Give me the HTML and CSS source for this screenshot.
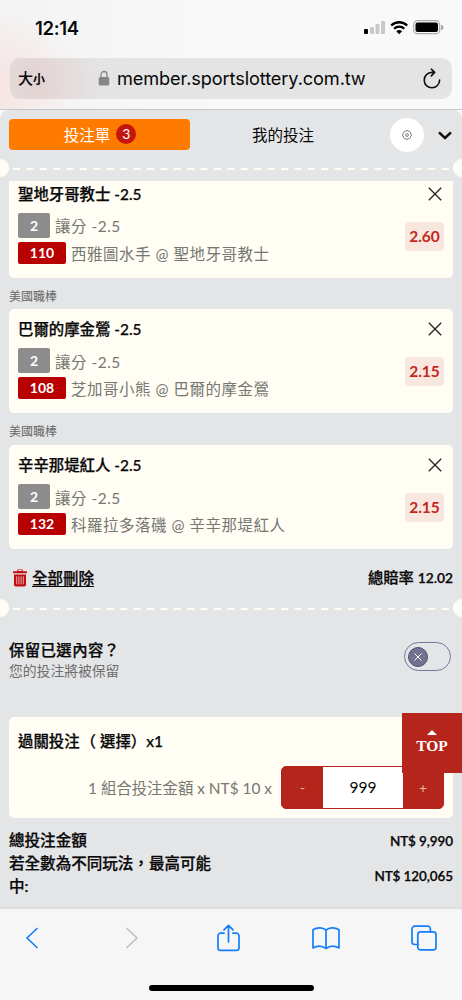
FILE: index.html
```
<!DOCTYPE html>
<html lang="zh-Hant">
<head>
<meta charset="utf-8">
<title>投注單</title>
<link rel="stylesheet" href="styles.css">
</head>
<body>
<div class="phone">
  <header class="browser-top">
    <div class="status">
      <span class="clock">12:14</span>
      <svg class="status-icons" width="80" height="16" viewBox="0 0 80 16">
        <rect x="0" y="9" width="4" height="5" rx="1" fill="#000"/>
        <g fill="#c8c8c8"><rect x="6" y="7" width="4" height="7" rx="1"/><rect x="11.500" y="4" width="4" height="10" rx="1"/><rect x="17" y="1" width="4" height="13" rx="1"/></g>
        <g fill="none" stroke="#000" stroke-width="2.300"><path d="M27.200 5.500a11.500 11.500 0 0 1 16 0"/><path d="M30.100 8.800a7.300 7.300 0 0 1 10.200 0"/></g>
        <path d="M32.300 11.200a4.300 4.300 0 0 1 5.800 0l-2.900 3z" fill="#000"/>
        <rect x="49.700" y=".7" width="26" height="13" rx="3.800" fill="none" stroke="#aaa" stroke-width="1.200"/>
        <rect x="51.500" y="2.500" width="22.500" height="9.500" rx="2" fill="#000"/>
        <path d="M77 5a2.500 2.500 0 0 1 0 5z" fill="#aaa"/>
      </svg>
    </div>
    <div class="address">
      <span class="text-size">大<small>小</small></span>
      <div class="host">
        <svg width="12" height="16" viewBox="0 0 12 16"><path d="M3 8V4.500a3 3 0 0 1 6 0V8" fill="none" stroke="#85858a" stroke-width="1.300"/><rect x=".7" y="7" width="10.500" height="8.500" rx="1.600" fill="#85858a"/></svg>
        <span>member.sportslottery.com.tw</span>
      </div>
      <svg class="reload" width="20" height="22" viewBox="0 0 20 22" fill="none" stroke="#111" stroke-width="1.600" stroke-linecap="round" stroke-linejoin="round"><path d="M17.600 12a7.700 7.700 0 1 1-7.700-7.600h2.600M9.300 1.200l3.400 3.200-3.400 3.500"/></svg>
    </div>
  </header>

  <main class="slip">
    <nav class="tabs">
      <div class="tab tab-active">投注單<span class="count">3</span></div>
      <div class="tab">我的投注</div>
      <div class="settings"><svg width="10" height="10" viewBox="0 0 10 10" fill="none" stroke="#666" stroke-width=".8"><path d="M4.100.6h1.800l.4 1 .9-.4 1.500 1.500-.4 1 1.100.4v1.800l-1 .4.400.9-1.500 1.500-1-.4-.4 1.100H4.100l-.4-1-1 .4-1.500-1.500.4-1-1-.4V4.100l1-.4-.4-1 1.500-1.500 1 .4z"/><circle cx="5" cy="5" r="1.400"/></svg></div>
      <svg class="collapse" width="14" height="9" viewBox="0 0 14 9" fill="none" stroke="#111" stroke-width="2.500"><path d="M1 1.300l6 5.700 6-5.700"/></svg>
    </nav>
    <div class="tear"><svg width="437" height="2"><path d="M0 1h437" stroke="#fffdf4" stroke-width="2" stroke-dasharray="7 6.400"/></svg></div>

    <div class="bets">
      <article class="card bet">
        <div class="bet-head"><h3>聖地牙哥教士 -2.5</h3><svg class="close" width="14" height="14" viewBox="0 0 14 14"><path d="M.8.800l12.400 12.400M13.200.800L.8 13.200"/></svg></div>
        <div class="bet-body">
          <div class="lines">
            <div class="line"><b class="tag tag-grey">2</b><span>讓分 -2.5</span></div>
            <div class="line"><b class="tag tag-red">110</b><span>西雅圖水手 @ 聖地牙哥教士</span></div>
          </div>
          <div class="odds">2.60</div>
        </div>
      </article>
      <p class="league">美國職棒</p>
      <article class="card bet">
        <div class="bet-head"><h3>巴爾的摩金鶯 -2.5</h3><svg class="close" width="14" height="14" viewBox="0 0 14 14"><path d="M.8.800l12.400 12.400M13.200.800L.8 13.200"/></svg></div>
        <div class="bet-body">
          <div class="lines">
            <div class="line"><b class="tag tag-grey">2</b><span>讓分 -2.5</span></div>
            <div class="line"><b class="tag tag-red">108</b><span>芝加哥小熊 @ 巴爾的摩金鶯</span></div>
          </div>
          <div class="odds">2.15</div>
        </div>
      </article>
      <p class="league">美國職棒</p>
      <article class="card bet">
        <div class="bet-head"><h3>辛辛那堤紅人 -2.5</h3><svg class="close" width="14" height="14" viewBox="0 0 14 14"><path d="M.8.800l12.400 12.400M13.200.800L.8 13.200"/></svg></div>
        <div class="bet-body">
          <div class="lines">
            <div class="line"><b class="tag tag-grey">2</b><span>讓分 -2.5</span></div>
            <div class="line"><b class="tag tag-red">132</b><span>科羅拉多落磯 @ 辛辛那堤紅人</span></div>
          </div>
          <div class="odds">2.15</div>
        </div>
      </article>
    </div>

    <div class="summary">
      <div class="delete">
        <svg width="14" height="18" viewBox="0 0 14 18"><path d="M0 2.300h14v2H0zM4.300 2.300V.5h5.400v1.800" fill="#c00d12"/><path d="M5.300 1.500h3.400" stroke="#e4e5e7"/><path d="M1 5.400h12v10.400a1.600 1.600 0 0 1-1.600 1.600H2.600A1.600 1.600 0 0 1 1 15.800z" fill="#c00d12"/><path d="M3.700 7.300v8M5.900 7.300v8M8.100 7.300v8M10.300 7.300v8" stroke="#e9b9bb" stroke-width=".9"/></svg>
        <span>全部刪除</span>
      </div>
      <div class="total-odds">總賠率 <b>12.02</b></div>
    </div>
    <div class="tear"><svg width="437" height="2"><path d="M0 1h437" stroke="#fffdf4" stroke-width="2" stroke-dasharray="7 6.400"/></svg></div>

    <section class="keep">
      <div><h3>保留已選內容？</h3><p>您的投注將被保留</p></div>
      <div class="switch"><span class="knob"><svg width="8" height="8" viewBox="0 0 8 8"><path d="M.5.500l7 7M7.500.500l-7 7" stroke="#fff" stroke-width="1"/></svg></span></div>
    </section>

    <section class="card parlay">
      <h3>過關投注<span class="paren-open">（</span>選擇<span class="paren-close">）</span>x1</h3>
      <div class="stake">
        <span class="stake-label">1 組合投注金額 x NT$ 10 x</span>
        <div class="stepper"><span>-</span><span class="amount">999</span><span>+</span></div>
      </div>
    </section>

    <section class="totals">
      <div class="total"><span>總投注金額</span><b>NT$ 9,990</b></div>
      <div class="total"><span>若全數為不同玩法，最高可能中:</span><b>NT$ 120,065</b></div>
    </section>
    <div class="to-top"><svg width="10" height="5" viewBox="0 0 10 5"><path d="M5 0l5 5H0z" fill="#fff"/></svg>TOP</div>
  </main>

  <footer class="browser-bottom">
    <div class="tools">
      <svg width="28" height="22" viewBox="-8 0 28 22" stroke="#147efb"><path d="M11 1.500L1 11l10 9.500"/></svg>
      <svg width="28" height="22" viewBox="-10 0 28 22" stroke="#bfbfc1"><path d="M1 1.500L11 11 1 20.500"/></svg>
      <svg width="28" height="28" viewBox="-2.500 0 28 28" stroke="#147efb"><path d="M7.500 9.200H4.200A2.700 2.700 0 0 0 1.500 12v11.700a2.700 2.700 0 0 0 2.700 2.700h15.600a2.700 2.700 0 0 0 2.700-2.700V12a2.700 2.700 0 0 0-2.700-2.800h-3.300M12 18V1.500M7.500 5.800L12 1.300l4.500 4.500"/></svg>
      <svg width="28" height="24" viewBox="0 0 28 24" stroke="#147efb"><path d="M14 4.200C11 1.400 5.500 1 1 3.700v18.200c4.500-2.400 9.500-2 13 .6 3.500-2.600 8.500-3 13-.6V3.700C22.500 1 17 1.400 14 4.200zM14 4.200v18.300"/></svg>
      <svg width="28" height="26" viewBox="-1 0 28 26" stroke="#147efb"><path d="M7 19.500H3.700A2.700 2.700 0 0 1 1 16.800V3.900a2.700 2.700 0 0 1 2.700-2.700h13a2.700 2.700 0 0 1 2.700 2.700v3"/><rect x="6.800" y="6.900" width="18.200" height="18" rx="2.700"/></svg>
    </div>
    <div class="home-bar"></div>
  </footer>
</div>
</body>
</html>
```
FILE: styles.css
```
* { box-sizing: border-box; }
body { margin: 0; font-family: Lato, "Noto Sans CJK TC", sans-serif; color: #080808; }
h3, p { margin: 0; }
svg { display: block; flex: none; }
.phone { width: 462px; height: 1000px; display: flex; flex-direction: column; overflow: hidden; background: #f8f8f8; white-space: nowrap; }

.browser-top { height: 110px; flex: none; border-bottom: 1px solid #c7c5c5; background: radial-gradient(ellipse 80px 75px at 0 84px, #f6e4e2, transparent), linear-gradient(90deg, #f3f3f3, #f9f9f9 50%); }
.status { height: 58px; padding: 0 18px 3px 35px; display: flex; align-items: center; justify-content: space-between; }
.clock { font: 600 18.500px/24px Inter, sans-serif; letter-spacing: -.3px; }
.address { height: 41px; margin: 0 10px; padding: 0 10px 0 8px; border-radius: 10px; display: flex; align-items: center; background: radial-gradient(ellipse 65px 65px at 25px 23px, #e3d2d1, transparent), #e4e4e4; }
.text-size { width: 80px; font: 500 15px/24px "Noto Sans CJK TC", sans-serif; }
.text-size small { font-size: 12px; font-weight: 700; }
.host { flex: 1; display: flex; align-items: center; gap: 7px; padding-bottom: 1px; font: 18.200px/24px Inter, sans-serif; letter-spacing: -.12px; }

.slip { position: relative; height: 797px; flex: none; background: #e4e5e7; border-radius: 9px 9px 0 0; display: flex; flex-direction: column; }
.tabs { height: 49px; padding: 0 10px 0 9px; display: flex; align-items: center; flex: none; }
.tab { width: 186px; height: 31px; padding-bottom: 2px; display: flex; align-items: center; justify-content: center; font-size: 15.500px; }
.tab-active { width: 181px; padding-left: 1px; border-radius: 4px; background: #ff7b00; color: #fff; gap: 6px; }
.count { width: 20px; height: 20px; margin-top: 1px; border-radius: 50%; background: #c4160f; font-size: 14px; line-height: 20px; text-align: center; }
.settings { width: 34px; height: 34px; margin-left: 14px; border-radius: 50%; background: #fff; display: flex; align-items: center; justify-content: center; }
.collapse { margin-left: 14px; margin-top: 2px; }
.tear { height: 18px; flex: none; display: flex; align-items: center; justify-content: space-between; overflow: hidden; }
.tear::before, .tear::after { content: ""; width: 18px; height: 18px; flex: none; border-radius: 50%; background: #fffdf4; }
.tear::before { margin-left: -9px; }
.tear::after { margin-right: -9px; }
.tear svg { margin-top: 1px; }

.bets { height: 368px; margin: 4px 9px 0; flex: none; overflow: hidden; display: flex; flex-direction: column; justify-content: flex-end; }
.card { background: #fffdf4; border-radius: 5px; }
.bet { height: 104px; flex: none; padding: 9px 9px 0; }
.bet-head { height: 22px; display: flex; align-items: center; justify-content: space-between; }
h3 { font-size: 15.400px; line-height: 22px; font-weight: 500; -webkit-text-stroke: .25px; }
.close { margin-right: 2px; fill: none; stroke: #222; stroke-width: 1.300; }
.bet-body { display: flex; justify-content: space-between; margin-top: 8px; }
.lines { display: flex; flex-direction: column; gap: 4px; }
.line { display: flex; align-items: center; gap: 5px; font-size: 15.500px; line-height: 22px; letter-spacing: .5px; color: #777772; }
.line > span { padding-top: 1px; margin-bottom: -1px; }
.tag { border-radius: 2px; color: #fff; font-size: 14px; letter-spacing: 0; text-align: center; }
.tag-grey { width: 32px; height: 25px; line-height: 25px; background: #8d8d8d; }
.tag-red { width: 48px; height: 22px; line-height: 22px; background: #b80000; }
.odds { width: 39px; height: 29px; margin-top: 9px; border-radius: 4px; background: #f8e7df; color: #c2281f; font-weight: 700; font-size: 15.500px; line-height: 29px; text-align: center; }
.league { height: 31.600px; flex: none; padding-top: 9px; font-size: 12px; line-height: 20px; color: #666; }

.summary { height: 50px; flex: none; padding: 9px 9px 0 13px; display: flex; justify-content: space-between; line-height: 40px; }
.delete { height: 40px; display: flex; align-items: center; gap: 5px; font-weight: 500; -webkit-text-stroke: .25px; font-size: 15.500px; line-height: 38px; text-decoration: underline; text-underline-offset: 2px; }
.total-odds { font-weight: 500; -webkit-text-stroke: .25px; font-size: 15.300px; line-height: 39px; }
.total-odds b { font-size: 13.800px; font-weight: 600; }

.keep { height: 100px; flex: none; padding: 22px 11px 0 9px; display: flex; justify-content: space-between; }
.keep h3 { letter-spacing: .4px; }
.keep p { font-size: 13.800px; line-height: 20px; color: #6c6c6c; }
.switch { width: 47px; height: 29px; margin-top: 3px; padding: 0 3px; border: 1px solid #77769a; border-radius: 15px; display: flex; align-items: center; }
.knob { width: 20px; height: 20px; border-radius: 50%; border: 1px solid #514f74; background: #737291; display: flex; align-items: center; justify-content: center; }

.parlay { height: 101px; flex: none; margin: 0 9px; padding: 13px 9px 0; }
.paren-open { margin-left: 1px; margin-right: 4px; }
.paren-close { margin-right: 0; }
.stake { margin-top: 14px; display: flex; align-items: center; justify-content: flex-end; gap: 9px; }
.stake-label { padding-bottom: 2px; font-size: 15.400px; color: #777772; }
.stepper { width: 163px; height: 43px; border: 1px solid #b6251b; border-radius: 5px; overflow: hidden; display: grid; grid-template-columns: 41px 1fr 40px; background: #b6251b; color: #e9b6ae; line-height: 41px; text-align: center; font-size: 14px; }
.amount { background: #fff; color: #080808; font-size: 15.500px; }

.totals { padding: 9px 9px 0; display: flex; flex-direction: column; }
.total { display: flex; align-items: center; justify-content: space-between; font-weight: 500; -webkit-text-stroke: .25px; font-size: 15.550px; line-height: 22.300px; }
.total span { width: 214px; white-space: normal; }
.total b { padding-top: 3px; font-size: 13.500px; font-weight: 600; letter-spacing: -.1px; }
.to-top { position: absolute; right: 0; top: 603px; width: 60px; height: 60px; padding-top: 17px; display: flex; flex-direction: column; align-items: center; background: #b6251b; color: #fff; font: 700 15.500px/22px "Liberation Serif", serif; }

.browser-bottom { flex: 1; border-top: 2px solid #dededf; background: #f6f6f6; display: flex; flex-direction: column; align-items: center; }
.tools { width: 462px; height: 57px; padding: 0 24px 0 18px; display: flex; align-items: center; justify-content: space-between; }
.tools svg { fill: none; stroke-width: 1.700; stroke-linecap: round; stroke-linejoin: round; }
.home-bar { width: 165px; height: 6px; margin-top: 19px; border-radius: 3px; background: #000; }
```
